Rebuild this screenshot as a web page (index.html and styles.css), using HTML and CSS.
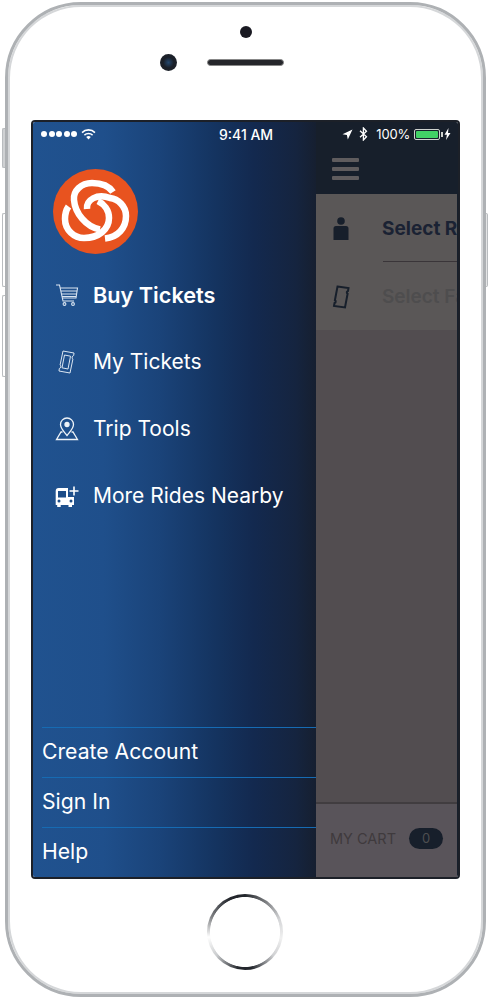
FILE: index.html
```html
<!DOCTYPE html>
<html>
<head>
    <meta charset="UTF-8">
    <meta name="viewport" content="width=device-width, initial-scale=1">
    <title>Buy Tickets menu</title>
    <link rel="stylesheet" href="styles.css">
</head>
<body>
    <div class="device">
        <span class="side-btn side-mute"></span>
        <span class="side-btn side-up"></span>
        <span class="side-btn side-down"></span>
        <span class="side-btn side-power"></span>

        <div class="phone">
            <div class="bezel-top">
                <span class="sensor"></span>
                <div class="cam-row">
                    <span class="camera"></span>
                    <span class="speaker"></span>
                </div>
            </div>

            <div class="screen">
                <div class="status">
                    <div class="status-left">
                        <span class="dots"><i></i><i></i><i></i><i></i><i></i></span>
                        <svg class="wifi" width="15" height="11" viewBox="0 0 15 11"><path d="M7.5 10.600 5.200 8a3.300 3.300 0 0 1 4.600 0zM3.900 6.700 2.900 5.600a6.600 6.600 0 0 1 9.200 0l-1 1.100a5.100 5.100 0 0 0-7.200 0zM1.600 4.200.5 3a9.900 9.900 0 0 1 14 0l-1.100 1.200a8.400 8.400 0 0 0-11.800 0z" fill="#fff"/></svg>
                    </div>
                    <span class="clock">9:41 AM</span>
                    <div class="status-right">
                        <svg width="11" height="11" viewBox="0 0 11 11"><path d="M10.500.5 5.800 10.500 4.900 6.100.5 5.200z" fill="#fff"/></svg>
                        <svg class="bt" width="9" height="14" viewBox="0 0 9 14"><path d="M1 3.700 7.500 9.700 4.400 13V1L7.500 4.300 1 10.300" fill="none" stroke="#fff" stroke-width="1.300"/></svg>
                        <span class="pct">100%</span>
                        <span class="battery"><b></b></span>
                        <svg width="7" height="12" viewBox="0 0 7 12"><path d="M4.500 0 .5 6.800h2.400L2 12l4.500-7H4z" fill="#fff"/></svg>
                    </div>
                </div>

                <nav class="drawer">
                    <svg class="logo" width="85" height="85" viewBox="0 0 85 85">
                        <circle cx="42.500" cy="42.500" r="42.500" fill="#e8531f"/>
                        <g fill="none" stroke="#fff" stroke-width="6.500">
                            <path d="M60 23C56 17 48 14 39 14 28 14 20 22 21 31 22 44 33 58 47 60.500"/>
                            <path d="M52 69.500C65 68 73 59 73 47 73 37 65 30 57 29 44 24 33 31 34 40"/>
                            <path d="M15.500 37.500C13 41 12 45 12 50 12 61 21 69 31 69 46 69 56 60 56 49 56 41 51 35 45 32"/>
                        </g>
                    </svg>

                    <ul class="menu">
                        <li class="menu-item active">
                            <svg class="menu-icon" width="24" height="24" viewBox="0 0 24 24" fill="none" stroke="#dbe6f2" stroke-width="1.100">
                                <path d="M1 2h3.500l3.500 16h11M5 5h17.500l-1.500 10H7.300M5.700 8h16.300M6.300 11h15.200M7 13.500h14.300"/>
                                <circle cx="9.500" cy="21" r="1.400"/>
                                <circle cx="18" cy="21" r="1.400"/>
                            </svg>
                            <span>Buy Tickets</span>
                        </li>
                        <li class="menu-item">
                            <svg class="menu-icon" width="24" height="24" viewBox="0 0 24 24" fill="none" stroke="#dbe6f2" stroke-width="1">
                                <path d="M8 1 19 3l-.3 2.500a2 2 0 0 0-.8 3.600L15 23 4 21l.3-2.500a2 2 0 0 0 .8-3.600z"/>
                                <path d="M9.500 5 15.500 6.200 13 19 7 17.800z"/>
                            </svg>
                            <span>My Tickets</span>
                        </li>
                        <li class="menu-item">
                            <svg class="menu-icon" width="24" height="24" viewBox="0 0 24 24" fill="none" stroke="#eef3f8" stroke-width="1.300">
                                <path d="M12 18.500C9 14.500 5.500 11.500 5.500 7.500a6.500 6.500 0 0 1 13 0c0 4-3.500 7-6.500 11z"/>
                                <circle cx="12" cy="7.500" r="2" fill="#eef3f8"/>
                                <path d="M7.500 15H6L1.500 22.500h21L18 15h-1.500"/>
                            </svg>
                            <span>Trip Tools</span>
                        </li>
                        <li class="menu-item">
                            <svg class="menu-icon" width="24" height="24" viewBox="0 0 24 24">
                                <path d="M.7 7a3 3 0 0 1 3-3H13v9h6v8h-2v2h-3.500v-2H5.700v2H2.200v-2H.7z" fill="#fff"/>
                                <path d="M3 7h8v6.500H3z" fill="#1d4d88"/>
                                <circle cx="4" cy="17" r="1.500" fill="#1d4d88"/>
                                <circle cx="16" cy="17" r="1.500" fill="#1d4d88"/>
                                <path d="M19 2.500v9M14.500 7h9" stroke="#fff" stroke-width="1.600"/>
                            </svg>
                            <span>More Rides Nearby</span>
                        </li>
                    </ul>

                    <ul class="account">
                        <li>Create Account</li>
                        <li>Sign In</li>
                        <li>Help</li>
                    </ul>
                </nav>

                <div class="main">
                    <header class="topbar">
                        <span class="burger"><i></i><i></i><i></i></span>
                    </header>
                    <div class="panel">
                        <div class="rows">
                            <div class="row">
                                <svg class="row-icon" width="18" height="24" viewBox="0 0 18 24"><circle cx="9" cy="4" r="3.800" fill="#171f2b"/><path d="M4 9h10a2.500 2.500 0 0 1 2.500 2.500V23h-15V11.500A2.500 2.500 0 0 1 4 9z" fill="#171f2b"/></svg>
                                <span class="row-title">Select Route</span>
                            </div>
                            <div class="row">
                                <svg class="row-icon" width="18" height="24" viewBox="0 0 18 24"><path d="M5.500 1.500 16.500 3l-.5 3a1.500 1.500 0 0 0-.4 2.800L13 22.500 2 21l.5-3a1.500 1.500 0 0 0 .4-2.800z" fill="none" stroke="#171f2b" stroke-width="2"/></svg>
                                <span class="row-title dim">Select Fare</span>
                            </div>
                        </div>
                        <div class="cart">
                            <span class="cart-label">MY CART</span>
                            <span class="cart-count">0</span>
                        </div>
                    </div>
                </div>
            </div>

            <div class="bezel-bottom">
                <span class="home"></span>
            </div>
        </div>
    </div>
</body>
</html>
```

FILE: styles.css
```css
html, body {
    margin: 0;
    padding: 0;
    background: #fff;
    font-family: Inter, Roboto, Arial, sans-serif;
}
ul {
    list-style: none;
    margin: 0;
    padding: 0;
}
.device {
    position: relative;
    width: 490px;
    height: 1000px;
    padding: 2px 4px 3px 5px;
    box-sizing: border-box;
    overflow: hidden;
}
.side-btn {
    position: absolute;
    left: 2px;
    width: 4px;
    box-sizing: border-box;
    background: #fff;
    border: 1px solid #b9bcbf;
    border-right: 0;
    border-radius: 2px 0 0 2px;
}
.side-mute { top: 128px; height: 40px; background: #cfd1d3; }
.side-up { top: 213px; height: 74px; }
.side-down { top: 295px; height: 82px; }
.side-power {
    left: 484px;
    top: 213px;
    height: 74px;
    border: 1px solid #b9bcbf;
    border-left: 0;
    border-radius: 0 2px 2px 0;
    background: #e4e5e6;
}

.phone {
    position: relative;
    z-index: 1;
    height: 100%;
    box-sizing: border-box;
    border: 3px solid #aeb1b4;
    border-radius: 76px;
    box-shadow: inset 0 0 0 2px #d5d7d9;
    background: #fff;
    padding: 0 23px;
    display: flex;
    flex-direction: column;
}
.bezel-top {
    height: 115px;
    display: flex;
    flex-direction: column;
    align-items: center;
    flex: none;
}
.sensor {
    width: 12px;
    height: 12px;
    margin-top: 21px;
    border-radius: 50%;
    background: #1a1a22;
}
.cam-row {
    display: flex;
    align-items: center;
    gap: 30px;
    margin-top: 16px;
    margin-right: 47px;
}
.camera {
    width: 17px;
    height: 17px;
    border-radius: 50%;
    background: radial-gradient(circle at 50% 50%, #24476e 0, #1a1f28 45%, #20242c 100%);
}
.speaker {
    width: 77px;
    height: 7px;
    border-radius: 4px;
    background: #25262b;
    border: 1px solid #888;
    box-sizing: border-box;
}

.screen {
    position: relative;
    height: 759px;
    flex: none;
    display: flex;
    box-sizing: border-box;
    border: 2px solid #1c2028;
    border-radius: 4px;
    overflow: hidden;
}
.status {
    position: absolute;
    top: 0;
    left: 0;
    right: 0;
    height: 24px;
    display: flex;
    align-items: center;
    justify-content: space-between;
    padding: 0 7px 0 8px;
    color: #fff;
    font-size: 13px;
}
.status-left, .status-right {
    display: flex;
    align-items: center;
}
.status-left { gap: 4px; }
.status-right { gap: 6px; }
.dots {
    display: flex;
    gap: 1.500px;
}
.dots i {
    width: 6px;
    height: 6px;
    border-radius: 50%;
    background: #fff;
}
.clock {
    font-size: 14px;
    font-weight: 500;
    position: absolute;
    left: 186px;
}
.pct {
    font-size: 13px;
    letter-spacing: -0.200px;
    margin-left: 2px;
}
.battery {
    position: relative;
    width: 26px;
    height: 11px;
    box-sizing: border-box;
    border: 1px solid #cfd3cf;
    padding: 1px;
    border-radius: 2px;
    display: flex;
    margin-left: -2px;
    margin-right: -2px;
}
.battery b {
    flex: 1;
    background: #42d266;
    border-radius: 1px;
}
.battery::after {
    content: "";
    position: absolute;
    right: -4px;
    top: 2px;
    width: 2px;
    height: 5px;
    background: #cfd3cf;
}

.drawer {
    width: 283px;
    flex: none;
    display: flex;
    flex-direction: column;
    color: #fff;
    background: linear-gradient(90deg, #20528f 0, #1f4f8b 25%, #1a4379 45%, #14335f 65%, #13294f 78%, #15243f 93%, #161f30 100%);
}
.logo {
    margin: 47px 0 0 20px;
    flex: none;
}
.menu {
    margin-top: 7px;
}
.menu-item {
    display: flex;
    align-items: center;
    height: 67px;
    padding-left: 22px;
    gap: 14px;
    font-size: 21px;
    font-weight: 400;
}
.menu-item.active {
    font-size: 21.700px;
    font-weight: 600;
}
.menu-icon { flex: none; }
.account {
    margin-top: auto;
    margin-left: 9px;
}
.account li {
    height: 50px;
    line-height: 46px;
    box-sizing: border-box;
    border-top: 1px solid #166bb3;
    font-size: 21.200px;
}

.main {
    flex: 1;
    min-width: 0;
    display: flex;
    flex-direction: column;
    background: #171f2b;
}
.topbar {
    height: 72px;
    flex: none;
    padding: 36px 0 0 16px;
    box-sizing: border-box;
}
.burger {
    display: flex;
    flex-direction: column;
    gap: 5px;
    width: 27px;
}
.burger i {
    height: 4px;
    border-radius: 1px;
    background: #5f5c5e;
}
.panel {
    flex: 1;
    margin-right: 1px;
    display: flex;
    flex-direction: column;
    background: #524d50;
    overflow: hidden;
}
.rows {
    height: 136px;
    background: #5a5757;
    flex: none;
}
.row {
    height: 67px;
    padding-top: 2px;
    box-sizing: border-box;
    display: flex;
    align-items: center;
    white-space: nowrap;
    position: relative;
}
.row + .row {
    padding-top: 4px;
}
.row + .row::before {
    content: "";
    position: absolute;
    left: 67px;
    right: 0;
    top: 0;
    height: 1px;
    background: #3a3539;
}
.row-icon {
    margin-left: 16px;
    width: 18px;
    flex: none;
}
.row-title {
    margin-left: 32px;
    font-size: 19px;
    font-weight: 700;
    color: #1a2233;
}
.row-title.dim {
    font-weight: 600;
    color: #4e4d4e;
}
.cart {
    margin-top: auto;
    height: 75px;
    box-sizing: border-box;
    border-top: 2px solid #413d40;
    background: #59545a;
    display: flex;
    align-items: center;
    padding: 0 14px 5px 14px;
    justify-content: space-between;
}
.cart-label {
    font-size: 14.500px;
    color: #3f3a3d;
}
.cart-count {
    width: 34px;
    height: 21px;
    border-radius: 11px;
    background: #171f2b;
    color: #4e4e50;
    font-size: 13px;
    text-align: center;
    line-height: 21px;
}

.bezel-bottom {
    flex: 1;
    display: flex;
    justify-content: center;
    padding-top: 15px;
}
.home {
    width: 76px;
    height: 76px;
    margin-right: 2px;
    box-sizing: border-box;
    border-radius: 50%;
    background:
        radial-gradient(circle closest-side, #fff 91%, transparent 93%),
        conic-gradient(#23262c 0, #7d7f82 35deg, #d5d6d8 70deg, #f0f0f0 100deg, #cfd0d2 130deg, #23262c 170deg, #23262c 190deg, #c9cbcd 230deg, #fff 262deg, #7d7f82 295deg, #23262c 335deg, #23262c 360deg);
}
```
